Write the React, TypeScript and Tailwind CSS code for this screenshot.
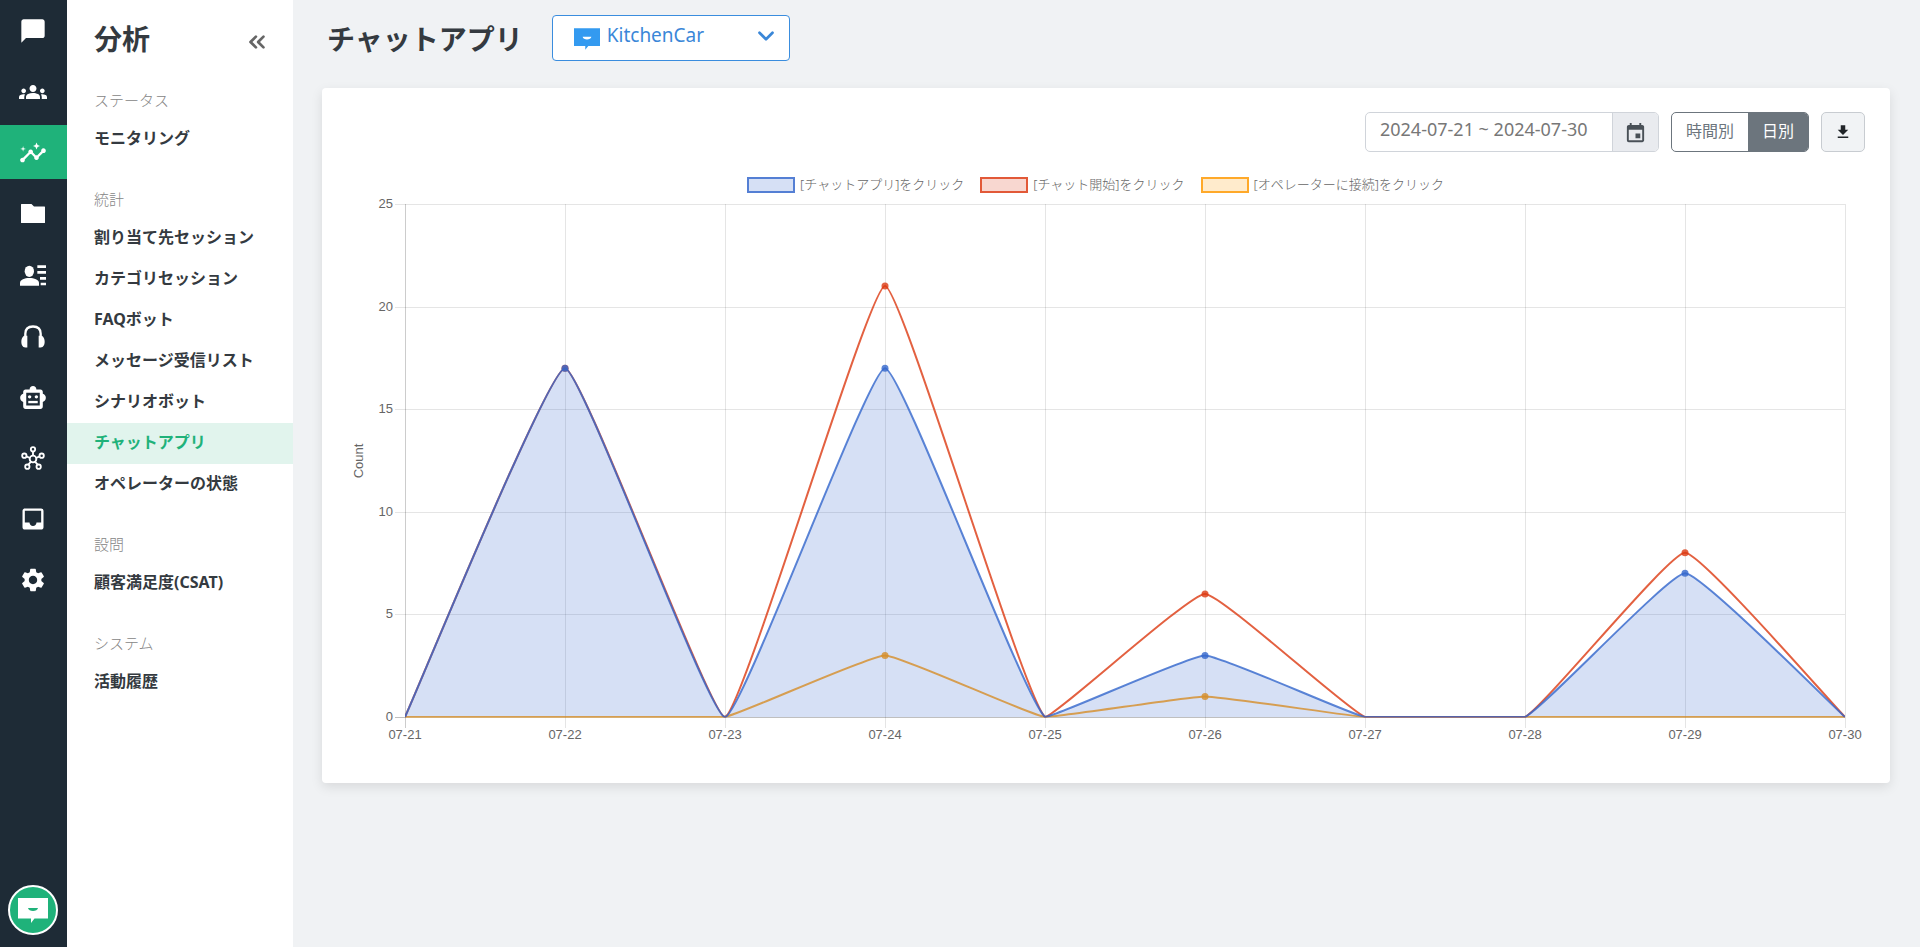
import { useEffect, useRef, useState } from "react";
import {
  MdChatBubble,
  MdFileDownload,
  MdGroups,
  MdInbox,
  MdInsertInvitation,
  MdInsights,
  MdSettings,
} from "react-icons/md";
import { FiChevronDown, FiChevronsLeft } from "react-icons/fi";

const FolderIcon = () => (
  <svg width="24" height="20" viewBox="0 0 24 20" fill="currentColor" aria-hidden="true">
    <path d="M.5 0H10.500L13 2.500H23.500a.5 .5 0 0 1 .5 .5V18.500a.5 .5 0 0 1-.5 .5H.5a.5 .5 0 0 1-.5-.5V.5A.5 .5 0 0 1 .5 0Z" />
  </svg>
);

const ContactIcon = () => (
  <svg width="26" height="21" viewBox="0 0 78 63" fill="currentColor" aria-hidden="true">
    <ellipse cx="28" cy="19" rx="14" ry="17" />
    <path d="M0 62V54C0 44 14 39 28 39S57 44 57 54V62Z" />
    <path d="M52 1H78V9H52ZM52 18H78V26H52ZM60 36H78V44H60ZM62 53H78V61H62Z" />
  </svg>
);

const HeadphonesIcon = () => (
  <svg width="24" height="23" viewBox="0 0 72 68" fill="none" aria-hidden="true">
    <path d="M13 36V26C13 12 22 4 36 4S59 12 59 26V36" stroke="currentColor" strokeWidth="7" />
    <path
      fill="currentColor"
      d="M19 32V67H13C4 67 1 58 1 50C1 43 3 37 9 32ZM53 32V67H59C68 67 71 58 71 50C71 43 69 37 63 32Z"
    />
  </svg>
);

const RobotIcon = () => (
  <svg width="26" height="23" viewBox="0 0 76 68" fill="currentColor" aria-hidden="true">
    <path
      fillRule="evenodd"
      d="M28 10C28 4 32 0 38 0S48 4 48 10H60C64 10 67 13 67 18V23C72 24 76 29 76 35S72 46 67 47V60C67 65 64 68 60 68H16C12 68 9 65 9 60V47C4 46 0 41 0 35S4 24 9 23V18C9 13 12 10 16 10ZM18 20V58H58V20Z"
    />
    <circle cx="28" cy="32" r="5" />
    <circle cx="48" cy="32" r="5" />
    <path d="M24 44H52V51H24Z" />
  </svg>
);

const HubIcon = () => (
  <svg width="24" height="24" viewBox="0 0 72 72" fill="none" stroke="currentColor" strokeWidth="5.500" aria-hidden="true">
    <circle cx="36" cy="39" r="10" />
    <circle cx="36" cy="10" r="6.500" />
    <circle cx="10" cy="29" r="6.500" />
    <circle cx="62" cy="29" r="6.500" />
    <circle cx="19" cy="62" r="6.500" />
    <circle cx="53" cy="62" r="6.500" />
    <path d="M36 17V29M16 31L27 36M56 31L45 36M22 56L30 47M50 56L42 47" />
  </svg>
);

const BubbleLogo = ({ className, mouth }: { className: string; mouth: string }) => (
  <svg className={className} viewBox="0 0 30 25" aria-hidden="true">
    <path d="M0 0H30V20.500H16.500L13 25V20.500H0Z" fill="currentColor" />
    <path d="M10 10H20C19.500 14 10.500 14 10 10Z" fill={mouth} />
  </svg>
);

const railItems = [
  { label: "チャット", icon: <MdChatBubble size={28} /> },
  { label: "チーム", icon: <MdGroups size={28} /> },
  { label: "分析", icon: <MdInsights size={28} />, active: true },
  { label: "フォルダ", icon: <FolderIcon /> },
  { label: "連絡先", icon: <ContactIcon /> },
  { label: "サポート", icon: <HeadphonesIcon /> },
  { label: "ボット", icon: <RobotIcon /> },
  { label: "連携", icon: <HubIcon /> },
  { label: "受信箱", icon: <MdInbox size={28} /> },
  { label: "設定", icon: <MdSettings size={28} /> },
];

const menu = [
  { title: "ステータス", items: ["モニタリング"] },
  {
    title: "統計",
    items: [
      "割り当て先セッション",
      "カテゴリセッション",
      "FAQボット",
      "メッセージ受信リスト",
      "シナリオボット",
      "チャットアプリ",
      "オペレーターの状態",
    ],
  },
  { title: "設問", items: ["顧客満足度(CSAT)"] },
  { title: "システム", items: ["活動履歴"] },
];
const current = "チャットアプリ";

const days = ["07-21", "07-22", "07-23", "07-24", "07-25", "07-26", "07-27", "07-28", "07-29", "07-30"];
const series = [
  {
    name: "[チャットアプリ]をクリック",
    color: "#3366cc",
    swatch: "border-[#3366cc]/80 bg-[#3366cc]/20",
    fill: true,
    data: [0, 17, 0, 17, 0, 3, 0, 0, 7, 0],
  },
  {
    name: "[チャット開始]をクリック",
    color: "#dc3912",
    swatch: "border-[#dc3912]/80 bg-[#dc3912]/20",
    fill: false,
    data: [0, 17, 0, 21, 0, 6, 0, 0, 8, 0],
  },
  {
    name: "[オペレーターに接続]をクリック",
    color: "#ff9900",
    swatch: "border-[#ff9900]/80 bg-[#ff9900]/20",
    fill: false,
    data: [0, 0, 0, 3, 0, 1, 0, 0, 0, 0],
  },
];

type Point = { x: number; y: number };

/* Smooth path whose control points stay inside the plot area. */
function curve(points: Point[], tension: number, top: number, bottom: number) {
  const clamp = (v: number) => Math.min(bottom, Math.max(top, v));
  const controls = points.map((p, i) => {
    const prev = points[i - 1] ?? p;
    const next = points[i + 1] ?? p;
    const d01 = Math.hypot(p.x - prev.x, p.y - prev.y);
    const d12 = Math.hypot(next.x - p.x, next.y - p.y);
    const a = (tension * d01) / (d01 + d12);
    const b = (tension * d12) / (d01 + d12);
    return {
      inX: p.x - a * (next.x - prev.x),
      inY: clamp(p.y - a * (next.y - prev.y)),
      outX: p.x + b * (next.x - prev.x),
      outY: clamp(p.y + b * (next.y - prev.y)),
    };
  });
  return points
    .map((p, i) =>
      i === 0
        ? `M${p.x} ${p.y}`
        : `C${controls[i - 1].outX} ${controls[i - 1].outY} ${controls[i].inX} ${controls[i].inY} ${p.x} ${p.y}`,
    )
    .join("");
}

function Chart() {
  const box = useRef<HTMLDivElement>(null);
  const [width, setWidth] = useState(1520);
  useEffect(() => {
    const el = box.current;
    if (!el) return;
    const update = () => setWidth(el.clientWidth);
    update();
    const observer = new ResizeObserver(update);
    observer.observe(el);
    return () => observer.disconnect();
  }, []);

  const left = 59;
  const right = width - 20;
  const top = 8;
  const bottom = 521;
  const xAt = (i: number) => left + ((right - left) * i) / (days.length - 1);
  const yAt = (v: number) => bottom - ((bottom - top) * v) / 25;
  const crisp = (v: number) => Math.round(v) + 0.5;

  return (
    <div ref={box} className="w-full">
      <svg
        width="100%"
        height="547"
        role="img"
        aria-label="日別クリック数"
        className="block overflow-visible text-[13px]"
        fontFamily='"Liberation Sans", sans-serif'
      >
        <clipPath id="plot">
          <rect x={left} y={top} width={right - left} height={bottom - top + 0.5} />
        </clipPath>
        {[0, 5, 10, 15, 20, 25].map((v) => (
          <g key={v}>
            <line
              x1={left - 10}
              x2={right}
              y1={crisp(yAt(v))}
              y2={crisp(yAt(v))}
              stroke="#000"
              strokeOpacity={v === 0 ? 0.25 : 0.1}
            />
            <text x={left - 12} y={yAt(v) + 4} textAnchor="end" fill="#666">
              {v}
            </text>
          </g>
        ))}
        {days.map((d, i) => (
          <g key={d}>
            <line
              x1={crisp(xAt(i))}
              x2={crisp(xAt(i))}
              y1={top}
              y2={bottom + 11}
              stroke="#000"
              strokeOpacity={i === 0 ? 0.2 : 0.1}
            />
            <text x={xAt(i)} y={bottom + 22} textAnchor="middle" fill="#666">
              {d}
            </text>
          </g>
        ))}
        <text transform="translate(17 265) rotate(-90)" textAnchor="middle" fill="#666">
          Count
        </text>
        {[...series].reverse().map((s) => {
          const points = s.data.map((v, i) => ({ x: xAt(i), y: yAt(v) }));
          const path = curve(points, 0.1, top, bottom);
          return (
            <g key={s.name}>
              <g clipPath="url(#plot)">
                {s.fill && <path d={`${path}L${right} ${bottom}L${left} ${bottom}Z`} fill={s.color} fillOpacity={0.2} />}
                <path d={path} fill="none" stroke={s.color} strokeOpacity={0.8} strokeWidth={2} />
              </g>
              {points.map(
                (p, i) => s.data[i] > 0 && <circle key={i} cx={p.x} cy={p.y} r={3.5} fill={s.color} fillOpacity={0.8} />,
              )}
            </g>
          );
        })}
      </svg>
    </div>
  );
}

export default function App() {
  return (
    <div className="flex min-h-screen bg-[#f0f2f4] font-['Noto_Sans','Noto_Sans_CJK_JP',sans-serif] text-[#343a40]">
      <nav aria-label="メイン" className="flex w-[67px] shrink-0 flex-col justify-between bg-[#1e2b36] pt-[3px] pb-3 text-white">
        <div className="flex flex-col gap-[7px]">
          {railItems.map((item) => (
            <a
              key={item.label}
              href="#"
              aria-label={item.label}
              className={`flex h-[54px] items-center justify-center pt-[2px] pr-[2px] ${item.active ? "bg-[#1fb27a]" : ""}`}
            >
              {item.icon}
            </a>
          ))}
        </div>
        <button
          type="button"
          aria-label="チャットを開く"
          className="mx-2 flex size-[50px] items-center justify-center rounded-full border-2 border-white bg-[#1fb27a]"
        >
          <BubbleLogo className="h-[25px] w-[30px]" mouth="#1fb27a" />
        </button>
      </nav>

      <aside className="w-[226px] shrink-0 bg-white">
        <div className="flex h-[86px] items-center justify-between pr-[23px] pl-[27px]">
          <h2 className="pb-2 text-[28px] leading-10 font-bold">分析</h2>
          <button type="button" aria-label="メニューを閉じる" className="pb-[2px] text-[#666]">
            <FiChevronsLeft size={26} strokeWidth={2.5} />
          </button>
        </div>
        {menu.map((section) => (
          <section key={section.title} className="pb-[25px]">
            <h3 className="mb-[5px] pl-[27px] text-[15px] leading-7 font-light text-[#868686]">{section.title}</h3>
            <ul>
              {section.items.map((item) => (
                <li key={item}>
                  <a
                    href="#"
                    className={`block h-[41px] pl-[27px] text-base leading-[39px] font-bold ${
                      item === current ? "bg-[#e1f4ed] text-[#1fb27a]" : ""
                    }`}
                  >
                    {item}
                  </a>
                </li>
              ))}
            </ul>
          </section>
        ))}
      </aside>

      <main className="min-w-0 flex-1 pt-[15px] pr-[30px] pb-8 pl-[29px]">
        <header className="flex h-[46px] items-center gap-[29px] pl-[5px]">
          <h1 className="pt-[2px] text-[28px] leading-10 font-bold whitespace-nowrap">チャットアプリ</h1>
          <div className="relative">
            <select
              aria-label="チャットアプリを選択"
              className="h-[46px] w-[238px] appearance-none rounded-[4px] border border-[#3a8dde] bg-white pb-[6px] pl-[54px] text-[19px] text-[#3a87d8]"
            >
              <option>KitchenCar</option>
            </select>
            <BubbleLogo className="pointer-events-none absolute top-[13px] left-[22px] h-[22px] w-[26px] text-[#339af0]" mouth="#ffffff" />
            <FiChevronDown
              size={26}
              strokeWidth={2.5}
              className="pointer-events-none absolute top-[8px] right-[11px] text-[#3a87d8]"
            />
          </div>
        </header>

        <section className="mt-[27px] rounded-[4px] bg-white pt-6 pr-[25px] pb-10 pl-6 shadow-[0_4px_12px_rgba(0,0,0,0.1)]">
          <div className="flex justify-end gap-3">
            <div className="flex h-10 w-[294px] overflow-hidden rounded-[5px] border border-[#d0d4da]">
              <input
                aria-label="期間"
                defaultValue="2024-07-21 ~ 2024-07-30"
                className="min-w-0 flex-1 px-[14px] pb-[6px] text-lg text-[#777]"
              />
              <button
                type="button"
                aria-label="カレンダー"
                className="flex w-[46px] items-center justify-center border-l border-[#d0d4da] bg-[#e9ebef] pt-[2px] text-[#495057]"
              >
                <MdInsertInvitation size={23} />
              </button>
            </div>
            <div className="flex h-10 overflow-hidden rounded-[5px] border border-[#6c757d]">
              <button type="button" className="px-[14px] pb-[2px] text-base text-[#6c757d]">
                時間別
              </button>
              <button type="button" className="bg-[#6c757d] px-[14px] pb-[2px] text-base text-white">
                日別
              </button>
            </div>
            <button
              type="button"
              aria-label="ダウンロード"
              className="flex h-10 w-[44px] items-center justify-center rounded-[5px] border border-[#c8ccd1] bg-[#f1f3f5] text-[#212529]"
            >
              <MdFileDownload size={18} />
            </button>
          </div>
          <ul className="mt-[22px] flex h-[22px] items-center justify-center gap-4 pr-5 text-[13px] font-light text-[#666]">
            {series.map((s) => (
              <li key={s.name} className="flex items-center gap-[5px] whitespace-nowrap">
                <span className={`h-4 w-12 border-2 ${s.swatch}`} />
                {s.name}
              </li>
            ))}
          </ul>
          <Chart />
        </section>
      </main>
    </div>
  );
}
